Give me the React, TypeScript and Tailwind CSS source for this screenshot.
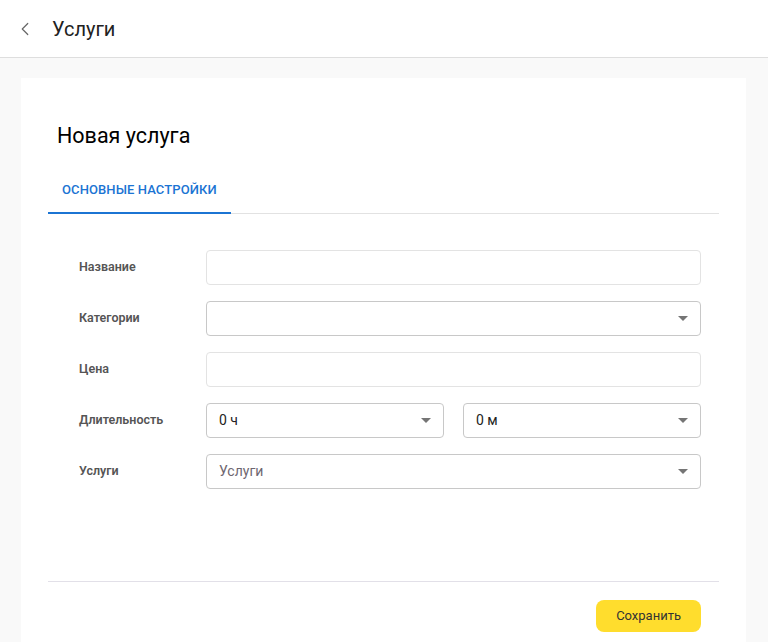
import { ChevronLeft } from 'lucide-react'

function Caret() {
  return (
    <svg width="10" height="5" viewBox="0 0 10 5" className="shrink-0">
      <path d="M0 0h10L5 5z" fill="#757575" />
    </svg>
  )
}

function TextField() {
  return <div className="h-[35px] w-full rounded-[4px] border border-[#e3e3e3] bg-white" />
}

function SelectField({ value, placeholder }: { value?: string; placeholder?: boolean }) {
  return (
    <div className="flex h-[35px] w-full items-center justify-between rounded-[4px] border border-[#c8c8c8] bg-white pl-[12px] pr-[12px]">
      <span className={placeholder ? 'text-[14px] text-[#6e6670]' : 'text-[14px] text-[#222]'}>
        {value}
      </span>
      <Caret />
    </div>
  )
}

function Row({ label, children }: { label: string; children: React.ReactNode }) {
  return (
    <div className="flex items-center">
      <div className="w-[127px] shrink-0 text-[12.5px] font-semibold text-[#555]">{label}</div>
      <div className="flex-1">{children}</div>
    </div>
  )
}

export default function App() {
  return (
    <div className="min-h-[642px] bg-[#f9f9f9] font-['Roboto',sans-serif]">
      <header className="flex h-[58px] items-center border-b border-[#dedede] bg-white">
        <ChevronLeft className="ml-[14px] h-[22px] w-[22px] text-[#666]" strokeWidth={1.3} />
        <h1 className="ml-[16px] text-[20px] text-[#222]">Услуги</h1>
      </header>

      <div className="pl-[21px] pr-[22px] pt-[20px]">
        <div className="bg-white pb-[40px] pl-[27px] pr-[27px] pt-[44px]">
          <h2 className="pl-[9px] text-[21.5px] leading-[28px] text-black">Новая услуга</h2>

          <div className="mt-[15px] flex border-b border-[#e2e2e2]">
            <div className="-mb-px border-b-2 border-[#1b74d3] px-[14px] pb-[12px] pt-[15px] text-[13px] font-medium tracking-[0.1px] text-[#1b74d3]">
              ОСНОВНЫЕ НАСТРОЙКИ
            </div>
          </div>

          <div className="flex flex-col gap-[16px] pl-[31px] pr-[18px] pt-[36px]">
            <Row label="Название">
              <TextField />
            </Row>
            <Row label="Категории">
              <SelectField />
            </Row>
            <Row label="Цена">
              <TextField />
            </Row>
            <Row label="Длительность">
              <div className="flex gap-[19px]">
                <SelectField value="0 ч" />
                <SelectField value="0 м" />
              </div>
            </Row>
            <Row label="Услуги">
              <SelectField value="Услуги" placeholder />
            </Row>
          </div>

          <div className="mt-[92px] border-t border-[#e2e0e8]" />

          <div className="flex justify-end pr-[18px] pt-[18px]">
            <button className="h-[32px] rounded-[8px] bg-[#ffdd2d] px-[20px] text-[13px] text-[#333]">
              Сохранить
            </button>
          </div>
        </div>
      </div>
    </div>
  )
}
